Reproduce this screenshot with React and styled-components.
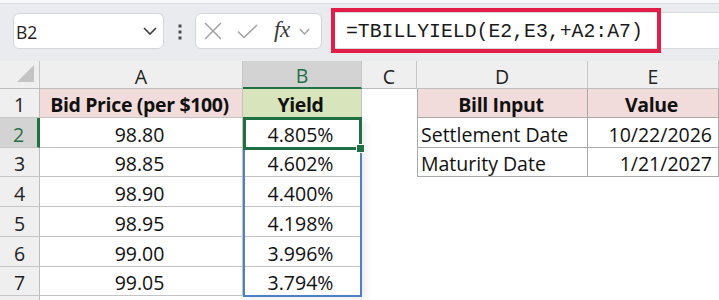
import React from "react";
import styled, { createGlobalStyle } from "styled-components";

const Global = createGlobalStyle`
  html, body { margin: 0; padding: 0; background: #ffffff; }
  body { font-family: "Open Sans", "Liberation Sans", sans-serif; }
`;

const Page = styled.div`
  width: 719px;
  height: 300px;
  overflow: hidden;
  background: #ffffff;
  display: flex;
  flex-direction: column;
`;

const Toolbar = styled.div`
  height: 48px;
  flex: 0 0 auto;
  border-top: 3px solid #f7f8f9;
  box-shadow: inset 0 1px 0 #d8dbdf;
  background: #e9ebee;
  display: flex;
  align-items: flex-start;
  padding: 10px 0 0 13px;
  box-sizing: content-box;
`;

const Box = styled.div`
  height: 36px;
  box-sizing: border-box;
  width: ${(p) => p.$w}px;
  border: 1px solid #d3d6da;
  border-radius: 6px;
  background: #ffffff;
  display: flex;
  align-items: center;
`;

const NameText = styled.span`
  flex: 1;
  padding-left: 2px;
  padding-top: 2px;
  font-family: "Open Sans", sans-serif;
  font-size: 17.5px;
  color: #222222;
`;

const Chevron = styled.svg`
  flex: 0 0 auto;
  margin-right: ${(p) => p.$mr || 0}px;
`;

const Dots = styled.svg`
  margin: 11px 13px 0 14px;
`;

const IconSlot = styled.svg`
  flex: 0 0 auto;
  margin-left: ${(p) => p.$ml}px;
`;

const Fx = styled.span`
  font-family: "Liberation Serif", "DejaVu Serif", serif;
  font-style: italic;
  font-size: 23px;
  color: #3a3a3a;
  margin-left: 16px;
  margin-right: 9px;
  letter-spacing: -0.5px;
  line-height: 1;
  padding-bottom: 3px;
`;

const FormulaArea = styled.div`
  flex: 1;
  margin-left: 9px;
  margin-top: -1px;
  height: 37px;
  box-sizing: border-box;
  background: #ffffff;
  border-top: 1px solid #d6d9dd;
  border-bottom: 1px solid #d6d9dd;
  display: flex;
  align-items: flex-start;
`;

const Highlight = styled.div`
  width: 330px;
  height: 45px;
  margin-top: -5px;
  box-sizing: border-box;
  border: 4px solid #e11d48;
  display: flex;
  align-items: center;
  padding-left: 11px;
  position: relative;
  z-index: 2;
`;

const FormulaText = styled.span`
  font-family: "Liberation Mono", "DejaVu Sans Mono", monospace;
  font-size: 19.8px;
  color: #1a1a1a;
  white-space: pre;
  padding-top: 2px;
`;

const Sheet = styled.div`
  flex: 1;
  display: grid;
  grid-template-columns: 40px 203px 119px 55px 171px 131px;
  grid-template-rows: 28px 29px 30px 29px 30px 30px 30px 29px 30px;
  overflow: hidden;
  font-family: "Open Sans", "Liberation Sans", sans-serif;
  font-size: 19.5px;
  color: #111111;
`;

const Corner = styled.div`
  grid-row: 1;
  grid-column: 1;
  background: #efefef;
  border-right: 1px solid #c6c6c6;
  border-bottom: 1px solid #bdbdbd;
  display: flex;
  align-items: flex-end;
  justify-content: flex-end;
  padding: 0 5px 6px 0;
`;

const ColHead = styled.div`
  grid-row: 1;
  grid-column: ${(p) => p.$c};
  background: ${(p) => (p.$active ? "#d3d3d3" : "#efefef")};
  color: ${(p) => (p.$active ? "#1f7144" : "#222222")};
  border-right: 1px solid #c6c6c6;
  border-bottom: ${(p) => (p.$active ? "2px solid #1f7144" : "1px solid #bdbdbd")};
  display: flex;
  align-items: center;
  justify-content: center;
  padding-top: 3px;
`;

const RowHead = styled.div`
  grid-row: ${(p) => p.$r};
  grid-column: 1;
  background: ${(p) => (p.$active ? "#d3d3d3" : "#efefef")};
  color: ${(p) => (p.$active ? "#1f7144" : "#222222")};
  border-right: ${(p) => (p.$active ? "3px solid #1f7144" : "1px solid #bdbdbd")};
  border-bottom: 1px solid #c6c6c6;
  display: flex;
  align-items: center;
  justify-content: center;
  padding-top: 3px;
`;

const lineColor = { grid: "#c3c3c3", table: "#a9a9a9" };

const Cell = styled.div`
  grid-row: ${(p) => p.$r};
  grid-column: ${(p) => p.$c};
  background: ${(p) => p.$fill || "#ffffff"};
  font-weight: ${(p) => (p.$bold ? 700 : 400)};
  letter-spacing: ${(p) => (p.$bold ? "-0.35px" : "0")};
  display: flex;
  align-items: center;
  justify-content: ${(p) => p.$align};
  padding: 3px 6px 0 3px;
  white-space: nowrap;
  overflow: hidden;
  border-right: ${(p) => (p.$line ? `1px solid ${lineColor[p.$line]}` : "none")};
  border-bottom: ${(p) => (p.$line ? `1px solid ${lineColor[p.$line]}` : "none")};
  border-left: ${(p) => (p.$lead ? `1px solid ${lineColor.table}` : "none")};
`;

const RangeOutline = styled.div`
  grid-row: 3 / span 6;
  grid-column: 3;
  border: 2px solid #4f80c6;
  margin: 0 0 -1px 0;
  box-shadow: 4px 2px 7px rgba(0, 0, 0, 0.08);
  pointer-events: none;
  z-index: 1;
`;

const ActiveCell = styled.div`
  grid-row: 3;
  grid-column: 3;
  border: 3px solid #1f7144;
  margin: -1px 0 -2px 0;
  position: relative;
  pointer-events: none;
  z-index: 2;
`;

const FillHandle = styled.div`
  position: absolute;
  right: -5px;
  bottom: -5px;
  width: 7px;
  height: 7px;
  background: #1f7144;
  box-shadow: 0 0 0 1px #ffffff;
`;

const columns = ["A", "B", "C", "D", "E"];

const PINK = "#f2dcdb";
const GREEN = "#d8e4bc";

const yields = [
  ["98.80", "4.805%"],
  ["98.85", "4.602%"],
  ["98.90", "4.400%"],
  ["98.95", "4.198%"],
  ["99.00", "3.996%"],
  ["99.05", "3.794%"],
];

const bill = [
  ["Settlement Date", "10/22/2026"],
  ["Maturity Date", "1/21/2027"],
];

function buildCells() {
  const cells = [];
  cells.push({ r: 2, c: 2, text: "Bid Price (per $100)", bold: true, fill: PINK, align: "center", line: "grid" });
  cells.push({ r: 2, c: 3, text: "Yield", bold: true, fill: GREEN, align: "center", line: "grid" });
  cells.push({ r: 2, c: 4, text: "", align: "center" });
  cells.push({ r: 2, c: 5, text: "Bill Input", bold: true, fill: PINK, align: "center", line: "table", lead: true });
  cells.push({ r: 2, c: 6, text: "Value", bold: true, fill: PINK, align: "center", line: "table" });
  yields.forEach(([price, y], i) => {
    const r = i + 3;
    cells.push({ r, c: 2, text: price, align: "center", line: "grid" });
    cells.push({ r, c: 3, text: y, align: "center", line: "grid" });
    cells.push({ r, c: 4, text: "", align: "center" });
    if (i < bill.length) {
      cells.push({ r, c: 5, text: bill[i][0], align: "flex-start", line: "table", lead: true });
      cells.push({ r, c: 6, text: bill[i][1], align: "flex-end", line: "table" });
    } else {
      cells.push({ r, c: 5, text: "", align: "center" });
      cells.push({ r, c: 6, text: "", align: "center" });
    }
  });
  for (let c = 2; c <= 6; c++) cells.push({ r: 9, c, text: "", align: "center" });
  return cells;
}

const rowLabels = ["1", "2", "3", "4", "5", "6", "7", ""];

export default function App() {
  const cells = buildCells();
  return (
    <Page>
      <Global />
      <Toolbar>
        <Box $w={151}>
          <NameText>B2</NameText>
          <Chevron $mr={6} width="14" height="8" viewBox="0 0 14 8">
            <path d="M1 1 L7 7 L13 1" fill="none" stroke="#3c3c3c" strokeWidth="1.6" />
          </Chevron>
        </Box>
        <Dots width="4" height="16" viewBox="0 0 4 16">
          <rect x="0.5" y="0.5" width="3" height="3" fill="#4a4a4a" />
          <rect x="0.5" y="6.5" width="3" height="3" fill="#4a4a4a" />
          <rect x="0.5" y="12.5" width="3" height="3" fill="#4a4a4a" />
        </Dots>
        <Box $w={127}>
          <IconSlot $ml={8} width="18" height="18" viewBox="0 0 18 18">
            <path d="M1 1 L17 17 M17 1 L1 17" stroke="#a0a0a0" strokeWidth="1.5" fill="none" />
          </IconSlot>
          <IconSlot $ml={15} width="21" height="15" viewBox="0 0 21 15">
            <path d="M1 7.5 L7 13.5 L20 1" stroke="#a0a0a0" strokeWidth="1.5" fill="none" />
          </IconSlot>
          <Fx>fx</Fx>
          <Chevron width="11" height="7" viewBox="0 0 11 7">
            <path d="M0.8 1 L5.5 6 L10.2 1" fill="none" stroke="#a0a0a0" strokeWidth="1.4" />
          </Chevron>
        </Box>
        <FormulaArea>
          <Highlight>
            <FormulaText>=TBILLYIELD(E2,E3,+A2:A7)</FormulaText>
          </Highlight>
        </FormulaArea>
      </Toolbar>
      <Sheet>
        <Corner>
          <svg width="17" height="17" viewBox="0 0 17 17">
            <polygon points="17,0 17,17 0,17" fill="#c4c4c4" />
          </svg>
        </Corner>
        {columns.map((col, i) => (
          <ColHead key={col} $c={i + 2} $active={col === "B"}>
            {col}
          </ColHead>
        ))}
        {rowLabels.map((label, i) => (
          <RowHead key={i} $r={i + 2} $active={i === 1}>
            {label}
          </RowHead>
        ))}
        {cells.map((cell) => (
          <Cell
            key={`${cell.r}-${cell.c}`}
            $r={cell.r}
            $c={cell.c}
            $bold={cell.bold}
            $fill={cell.fill}
            $align={cell.align}
            $line={cell.line}
            $lead={cell.lead}
          >
            {cell.text}
          </Cell>
        ))}
        <RangeOutline />
        <ActiveCell>
          <FillHandle />
        </ActiveCell>
      </Sheet>
    </Page>
  );
}
